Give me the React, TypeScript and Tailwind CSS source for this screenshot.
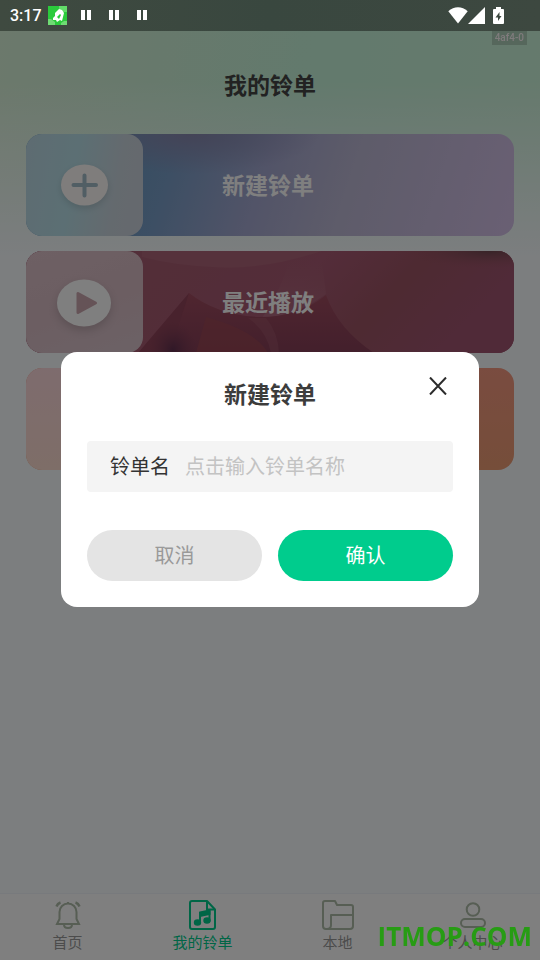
import React, { useState } from 'react';
import clsx from 'clsx';

const fontStack = "font-['Noto_Sans_CJK_SC','Liberation_Sans',sans-serif]";

function PauseIcon() {
  return (
    <svg width="10" height="11" viewBox="0 0 10 11" fill="#fff">
      <rect x="0" y="0" width="4" height="10" />
      <rect x="6" y="0" width="4" height="10" />
    </svg>
  );
}

function StatusBar() {
  return (
    <header className="sticky top-0 z-20 flex h-[31px] items-center bg-linear-to-r from-[#3f4a40] via-[#39473f] to-[#3d4840] pr-9 pl-2.5 text-white">
      <span className="w-[38px] font-[Roboto,sans-serif] text-base leading-5 font-medium">3:17</span>
      <svg width="19" height="19" viewBox="0 0 19 19">
        <rect width="19" height="19" fill="#2bcb3c" />
        <path d="M11 0h8v6h-5l-3-2z" fill="#62dc69" />
        <path d="M0 13h3l4 3v3H0zM13 17l3-2h3v4h-6z" fill="#6fdb74" />
        <path d="M5 12l2-2V7l4-4 3 1 2 3-1 4-1 4-2-1-3 2-1-2H5z" fill="#fff" />
        <path d="M9 11l3-3 1 1-2 4z" fill="#2bcb3c" />
      </svg>
      <div className="ml-3.5 flex gap-[18px]">
        <PauseIcon />
        <PauseIcon />
        <PauseIcon />
      </div>
      <div className="ml-auto flex items-center">
        <svg width="20" height="17" viewBox="0 0 20 17" fill="#fff">
          <path d="M10 16.500L.3 4.300C6-1 14-1 19.700 4.300z" />
        </svg>
        <svg width="17" height="17" viewBox="0 0 17 17" fill="#fff">
          <path d="M0 17L17 0v17z" />
        </svg>
        <svg className="ml-2" width="11" height="17" viewBox="0 0 11 17">
          <path d="M3 2V0h5v2h2q1 0 1 1v13q0 1-1 1H1q-1 0-1-1V3q0-1 1-1z" fill="#fff" />
          <path d="M6.500 5L2.500 10.500H5V14l3.500-5H6.500z" fill="#3c483f" />
        </svg>
      </div>
    </header>
  );
}

function PlusBadge() {
  return (
    <svg width="56" height="50" viewBox="0 0 56 50" className="drop-shadow-md">
      <ellipse cx="27.500" cy="25" rx="23.500" ry="20.500" fill="#fffaf8" />
      <path d="M16.500 25h22.500M27.500 15.500v20" stroke="#a2bcc8" strokeWidth="4" strokeLinecap="round" />
    </svg>
  );
}

function PlayBadge() {
  return (
    <svg width="56" height="50" viewBox="0 0 56 50" className="drop-shadow-lg">
      <ellipse cx="27" cy="26" rx="27" ry="23.500" fill="#fefefe" />
      <path d="M21 16.500v19L38.500 26z" fill="#cba6ae" stroke="#cba6ae" strokeWidth="3" strokeLinejoin="round" />
    </svg>
  );
}

function PetalArt() {
  return (
    <svg className="col-start-1 row-start-1 size-full" viewBox="0 0 488 102" preserveAspectRatio="none">
      <defs>
        <linearGradient id="petalBase" x1="0" y1="0" x2="1" y2="0.200">
          <stop offset="0" stopColor="#a8627c" />
          <stop offset="0.300" stopColor="#a65c70" />
          <stop offset="0.600" stopColor="#a85a74" />
          <stop offset="0.800" stopColor="#9c5464" />
          <stop offset="1" stopColor="#a05470" />
        </linearGradient>
        <linearGradient id="petalDark" x1="0" y1="0" x2="0" y2="1">
          <stop offset="0" stopColor="#a04c60" />
          <stop offset="1" stopColor="#863f58" />
        </linearGradient>
        <linearGradient id="petalLight" x1="0" y1="0" x2="0" y2="1">
          <stop offset="0" stopColor="#a85e72" stopOpacity="0" />
          <stop offset="1" stopColor="#b06a80" />
        </linearGradient>
        <radialGradient id="petalCorner" cx="0.950" cy="0" r="0.180">
          <stop offset="0" stopColor="#704850" />
          <stop offset="1" stopColor="#9c5464" stopOpacity="0" />
        </radialGradient>
        <radialGradient id="petalShade">
          <stop offset="0" stopColor="#60304f" />
          <stop offset="1" stopColor="#7c3c54" stopOpacity="0" />
        </radialGradient>
      </defs>
      <rect width="488" height="102" fill="url(#petalBase)" />
      <path d="M116 0h180q-60 20-110 16-40-2-70-10z" fill="#ac6478" />
      <path d="M294 0q4 24 6 43-30 22-64 24 20-30 26-55z" fill="url(#petalLight)" />
      <path d="M134 102L163 42q28 22 70 24 40 0 67-22 12 34 48 58z" fill="url(#petalDark)" />
      <path d="M112 102L163 42q-8 26-20 60z" fill="#90445a" />
      <path d="M180 66q50 14 62 36h-72z" fill="#a04a54" opacity="0.600" />
      <ellipse cx="147" cy="99" rx="24" ry="28" fill="url(#petalShade)" />
      <path d="M222 67h18q12 14 13 35h-8q-4-22-23-35z" fill="#a86072" opacity="0.400" />
      <rect width="488" height="102" fill="url(#petalCorner)" />
    </svg>
  );
}

function HomeIcon() {
  return (
    <svg width="26" height="28" viewBox="0 0 26 28" fill="none" stroke="#aebca8" strokeWidth="2">
      <path d="M2 23h22l-2.500-5v-7a8.500 8.500 0 0 0-17 0v7z" />
      <path d="M13 3V1M9 23.500q0 3.500 4 3.500t4-3.500" />
      <path d="M1.500 5.500q1-3 4-4M24.500 5.500q-1-3-4-4" strokeWidth="2.500" />
    </svg>
  );
}

function MusicIcon() {
  return (
    <svg width="28" height="30" viewBox="0 0 28 30" fill="none" stroke="#00cc8d" strokeWidth="2">
      <path d="M3 1h15l8 8.500v17.500q0 2-2 2H3q-2 0-2-2V3q0-2 2-2z" strokeLinejoin="round" />
      <path d="M18 1v8.500h8" />
      <path d="M11 23V13.500l9.500-2v10" />
      <path d="M11 12.500l9.500-2v3.500l-9.500 2z" fill="#00cc8d" />
      <ellipse cx="8.500" cy="22.500" rx="2.700" ry="2.300" fill="#00cc8d" />
      <ellipse cx="18" cy="20.500" rx="2.700" ry="2.300" fill="#00cc8d" />
    </svg>
  );
}

function FolderIcon() {
  return (
    <svg width="32" height="30" viewBox="0 0 32 30" fill="none" stroke="#aebca8" strokeWidth="2" strokeLinejoin="round">
      <path d="M1 26V3q0-2 2-2h10l2 4h14q2 0 2 2v19q0 3-3 3H4q-3 0-3-3z" />
      <path d="M31 15H9v10q0 4-4 4" />
    </svg>
  );
}

function UserIcon() {
  return (
    <svg width="26" height="26" viewBox="0 0 26 26" fill="none" stroke="#aebca8" strokeWidth="2">
      <circle cx="13" cy="7.500" r="6.300" />
      <rect x="1" y="17" width="24" height="8" rx="4" />
    </svg>
  );
}

const cards = [
  {
    id: 'create',
    label: '新建铃单',
    bg: 'bg-[radial-gradient(ellipse_at_34%_0,#8888ae,#8888ae00_28%),linear-gradient(108deg,#6c9cc4_20%,#7a9ec8_30%,#a4a8d0_48%,#bcb8d4_65%,#d4c0e8_100%)]',
    panel: 'bg-linear-[100deg,#bcd8e4,#b8dfe8_40%,#c9d4dd_75%,#ccd2dc]',
    badge: <PlusBadge />,
  },
  {
    id: 'recent',
    label: '最近播放',
    bg: 'bg-[#a65c70]',
    panel: 'bg-linear-[160deg,#dcc0c8,#d8bcc4_50%,#d8c4cc]',
    art: <PetalArt />,
    badge: <PlayBadge />,
  },
  {
    id: 'liked',
    bg: 'bg-linear-to-b from-[#f49880] to-[#ec9c74]',
    panel: 'bg-linear-to-b from-[#fcd8dc] to-[#fcdcd0]',
  },
];

const tabs = [
  { id: 'home', label: '首页', icon: <HomeIcon /> },
  { id: 'mine', label: '我的铃单', icon: <MusicIcon /> },
  { id: 'local', label: '本地', icon: <FolderIcon /> },
  { id: 'user', label: '个人中心', icon: <UserIcon /> },
];

function CreateDialog({ onClose }: { onClose: () => void }) {
  const [name, setName] = useState('');

  return (
    <form
      role="dialog"
      aria-label="新建铃单"
      onSubmit={(e) => e.preventDefault()}
      className="w-full rounded-2xl bg-white px-[26px] pt-[25px] pb-[26px]"
    >
      <div className="grid">
        <h2 className="col-start-1 row-start-1 text-center text-[23px] leading-8 font-bold text-[#3c3c3c]">新建铃单</h2>
        <button
          type="button"
          aria-label="关闭"
          onClick={onClose}
          className="col-start-1 row-start-1 mr-[5px] self-start justify-self-end"
        >
          <svg width="20" height="18" viewBox="0 0 20 18" stroke="#2c2c2c" strokeWidth="2">
            <path d="M2 .5l16 17M18 .5l-16 17" />
          </svg>
        </button>
      </div>

      <div className="mt-8 flex h-[51px] items-center rounded bg-[#f4f4f4] px-[23px]">
        <label htmlFor="ringName" className="shrink-0 text-xl text-[#333]">铃单名</label>
        <input
          id="ringName"
          value={name}
          onChange={(e) => setName(e.target.value)}
          placeholder="点击输入铃单名称"
          className="ml-[15px] w-full min-w-0 bg-transparent text-xl text-[#333] outline-none placeholder:text-[#c3c3c3]"
        />
      </div>

      <div className="mt-[38px] grid grid-cols-2 gap-4">
        <button type="button" onClick={onClose} className="h-[51px] rounded-full bg-[#e4e4e4] text-xl text-[#999]">
          取消
        </button>
        <button type="submit" className="h-[51px] rounded-full bg-[#00cc8d] text-xl text-white">
          确认
        </button>
      </div>
    </form>
  );
}

export default function App() {
  const [open, setOpen] = useState(true);
  const [active, setActive] = useState('mine');

  return (
    <div className={clsx('relative flex min-h-screen flex-col bg-[#f8fcff]', fontStack)}>
      <StatusBar />

      <main className="flex-1 bg-[linear-gradient(to_bottom,#f8fcff00_50px,#f8fcff_225px),linear-gradient(100deg,#d8f2d8,#c6f4da_55%,#ccf4da)] bg-[length:100%_230px] bg-no-repeat px-[26px] pb-8">
        <h1 className="pt-[37px] text-center text-[23px] leading-8 font-bold text-[#444]">我的铃单</h1>
        <div className="mt-[34px] flex flex-col gap-[15px]">
          {cards.map((card) => (
            <button
              key={card.id}
              onClick={() => setOpen(true)}
              className={clsx('grid h-[102px] w-full overflow-hidden rounded-2xl', card.bg)}
            >
              {card.art}
              <span className={clsx('relative col-start-1 row-start-1 flex w-[117px] items-center justify-center rounded-r-2xl', card.panel)}>
                {card.badge}
              </span>
              {card.label && (
                <span className="relative col-start-1 row-start-1 self-center pr-1 pb-0.5 text-[23px] leading-8 font-bold text-white">
                  {card.label}
                </span>
              )}
            </button>
          ))}
        </div>
      </main>

      <nav className="grid h-[67px] grid-cols-4 border-t border-[#f0f4fa] bg-white">
        {tabs.map((tab) => (
          <button
            key={tab.id}
            onClick={() => setActive(tab.id)}
            className={clsx(
              'flex flex-col items-center pt-1 text-[15px] leading-5',
              tab.id === active ? 'text-[#00cc8d]' : 'text-[#999]',
            )}
          >
            <span className="flex h-[34px] items-center">{tab.icon}</span>
            {tab.label}
          </button>
        ))}
      </nav>

      {open && (
        <div className="fixed inset-0 z-10 flex items-center justify-center bg-black/50 px-[61px] pb-0.5">
          <CreateDialog onClose={() => setOpen(false)} />
        </div>
      )}

      <span className="absolute top-[31px] right-[13px] z-20 bg-black/15 px-[3px] font-[Roboto,sans-serif] text-[10px] leading-[14px] font-medium text-[#7f7b7c]">
        4af4-0
      </span>
      <span className="absolute right-2 bottom-2 z-20 font-['Open_Sans',sans-serif] text-[26px] leading-8 font-bold text-[#279c14]">
        ITMOP.COM
      </span>
    </div>
  );
}
